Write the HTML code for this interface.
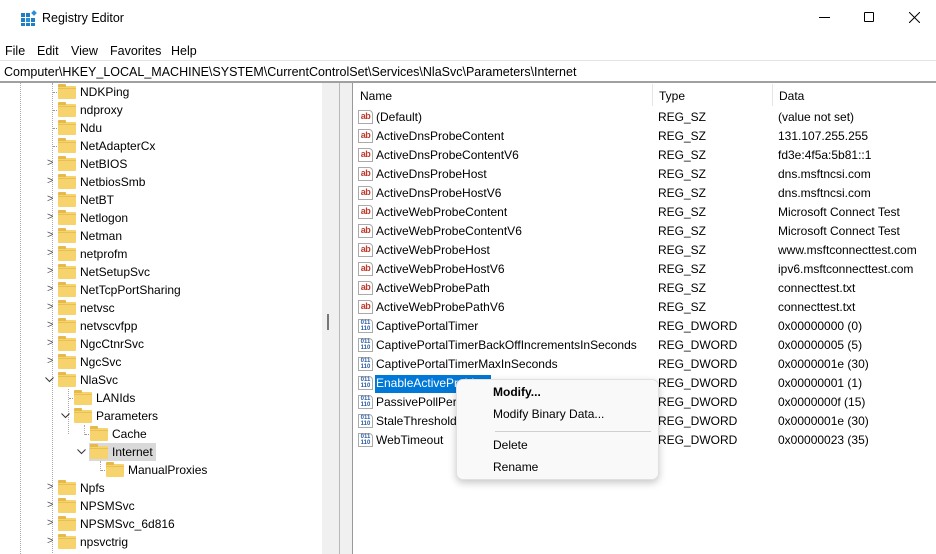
<!DOCTYPE html>
<html><head><meta charset="utf-8"><style>
*{margin:0;padding:0;box-sizing:border-box}
body{width:936px;height:554px;overflow:hidden;background:#fff;font-family:"Liberation Sans",sans-serif;font-size:12px;color:#000;position:relative}
.a{position:absolute;white-space:nowrap}
.t{position:absolute;height:18px;line-height:18px;white-space:nowrap}
.f{position:absolute;width:18px;height:13px;background:#f6d36c;border-radius:1px}
.f:before{content:"";position:absolute;left:0;top:-2px;width:8px;height:3px;background:#e6b94a;border-radius:1px 1px 0 0}
.f:after{content:"";position:absolute;left:0;right:0;top:2px;height:1px;background:#e8bf55}
.ex{position:absolute;font-size:11px;color:#555}
.dh{position:absolute;height:0;border-top:1px dotted #999;width:6px}
.r{position:absolute;height:19px;line-height:19px;white-space:nowrap}
.ab{position:absolute;width:15px;height:14px;border:1px solid #aaa;border-radius:0 4px 0 0;background:#fff;font-size:9px;font-weight:bold;color:#c0392b;line-height:11px;text-align:center;letter-spacing:-0.5px}
.dw{position:absolute;width:15px;height:14px;border:1px solid #aaa;border-radius:0 4px 0 0;background:#fff;font-size:6px;font-weight:bold;color:#2a5aa0;line-height:6px;text-align:center}
</style></head><body>
<!-- title bar -->
<svg class="a" style="left:21px;top:10px" width="16" height="16" viewBox="0 0 16 16">
<rect x="0" y="3" width="4" height="4" fill="#1f7fc4"/><rect x="5" y="3" width="4" height="4" fill="#1f7fc4"/>
<rect x="0" y="8" width="4" height="4" fill="#1f7fc4"/><rect x="5" y="8" width="4" height="4" fill="#2a90d6"/><rect x="10" y="8" width="4" height="4" fill="#1f7fc4"/>
<rect x="0" y="13" width="4" height="3" fill="#1f7fc4"/><rect x="5" y="13" width="4" height="3" fill="#1f7fc4"/><rect x="10" y="13" width="4" height="3" fill="#1f7fc4"/>
<rect x="11" y="1" width="4" height="4" fill="#2a90d6" transform="rotate(45 13 3)"/></svg>
<div class="a" style="left:42px;top:11px;font-size:12.5px">Registry Editor</div>
<div class="a" style="left:819px;top:17px;width:11px;height:1px;background:#000"></div>
<div class="a" style="left:864px;top:12px;width:10px;height:10px;border:1px solid #000;border-radius:1px"></div>
<svg class="a" style="left:909px;top:12px" width="11" height="11"><path d="M0 0L11 11M11 0L0 11" stroke="#000" stroke-width="1"/></svg>
<!-- menu -->
<div class="a" style="left:5px;top:44px;font-size:12.5px;word-spacing:0">File</div>
<div class="a" style="left:37px;top:44px;font-size:12.5px">Edit</div>
<div class="a" style="left:71px;top:44px;font-size:12.5px">View</div>
<div class="a" style="left:110px;top:44px;font-size:12.5px">Favorites</div>
<div class="a" style="left:171px;top:44px;font-size:12.5px">Help</div>
<!-- address -->
<div class="a" style="left:0;top:60px;width:936px;height:22px;background:#fff;border-top:1px solid #e4e4e4"></div>
<div class="a" style="left:4px;top:65px;font-size:12.5px">Computer\HKEY_LOCAL_MACHINE\SYSTEM\CurrentControlSet\Services\NlaSvc\Parameters\Internet</div>
<div class="a" style="left:0;top:81px;width:936px;height:2px;background:#a0a0a0"></div>
<!-- splitter / scrollbar -->
<div class="a" style="left:322px;top:83px;width:18px;height:471px;background:#f0f0f0"></div>
<div class="a" style="left:327px;top:314px;width:2px;height:16px;background:#777"></div>
<div class="a" style="left:339px;top:83px;width:1px;height:471px;background:#b8b8b8"></div>
<div class="a" style="left:340px;top:83px;width:12px;height:471px;background:#f0f0f0"></div>
<div class="a" style="left:352px;top:83px;width:1px;height:471px;background:#999"></div>
<!-- tree guide lines -->
<div class="a" style="left:20px;top:83px;height:471px;border-left:1px dotted #aaa"></div>
<div class="a" style="left:52px;top:83px;height:470px;border-left:1px dotted #aaa"></div>
<div class="a" style="left:68px;top:389px;height:45px;border-left:1px dotted #aaa"></div>
<div class="a" style="left:84px;top:425px;height:10px;border-left:1px dotted #aaa"></div>
<div class="a" style="left:100px;top:461px;height:10px;border-left:1px dotted #aaa"></div>
<div class="dh" style="left:53px;top:92px"></div><div class="dh" style="left:53px;top:110px"></div><div class="dh" style="left:53px;top:128px"></div><div class="dh" style="left:53px;top:146px"></div>
<div class="dh" style="left:69px;top:398px"></div><div class="dh" style="left:85px;top:434px"></div><div class="dh" style="left:101px;top:470px"></div>
<!-- tree rows level1 -->
<div class="f" style="left:58px;top:86px"></div><div class="t" style="left:80px;top:83px">NDKPing</div>
<div class="f" style="left:58px;top:104px"></div><div class="t" style="left:80px;top:101px">ndproxy</div>
<div class="f" style="left:58px;top:122px"></div><div class="t" style="left:80px;top:119px">Ndu</div>
<div class="f" style="left:58px;top:140px"></div><div class="t" style="left:80px;top:137px">NetAdapterCx</div>
<div class="ex" style="left:47px;top:157px">&gt;</div><div class="f" style="left:58px;top:158px"></div><div class="t" style="left:80px;top:155px">NetBIOS</div>
<div class="ex" style="left:47px;top:175px">&gt;</div><div class="f" style="left:58px;top:176px"></div><div class="t" style="left:80px;top:173px">NetbiosSmb</div>
<div class="ex" style="left:47px;top:193px">&gt;</div><div class="f" style="left:58px;top:194px"></div><div class="t" style="left:80px;top:191px">NetBT</div>
<div class="ex" style="left:47px;top:211px">&gt;</div><div class="f" style="left:58px;top:212px"></div><div class="t" style="left:80px;top:209px">Netlogon</div>
<div class="ex" style="left:47px;top:229px">&gt;</div><div class="f" style="left:58px;top:230px"></div><div class="t" style="left:80px;top:227px">Netman</div>
<div class="ex" style="left:47px;top:247px">&gt;</div><div class="f" style="left:58px;top:248px"></div><div class="t" style="left:80px;top:245px">netprofm</div>
<div class="ex" style="left:47px;top:265px">&gt;</div><div class="f" style="left:58px;top:266px"></div><div class="t" style="left:80px;top:263px">NetSetupSvc</div>
<div class="ex" style="left:47px;top:283px">&gt;</div><div class="f" style="left:58px;top:284px"></div><div class="t" style="left:80px;top:281px">NetTcpPortSharing</div>
<div class="ex" style="left:47px;top:301px">&gt;</div><div class="f" style="left:58px;top:302px"></div><div class="t" style="left:80px;top:299px">netvsc</div>
<div class="ex" style="left:47px;top:319px">&gt;</div><div class="f" style="left:58px;top:320px"></div><div class="t" style="left:80px;top:317px">netvscvfpp</div>
<div class="ex" style="left:47px;top:337px">&gt;</div><div class="f" style="left:58px;top:338px"></div><div class="t" style="left:80px;top:335px">NgcCtnrSvc</div>
<div class="ex" style="left:47px;top:355px">&gt;</div><div class="f" style="left:58px;top:356px"></div><div class="t" style="left:80px;top:353px">NgcSvc</div>
<svg class="a" style="left:45px;top:377px" width="9" height="6"><path d="M0.5 0.5L4.5 4.5L8.5 0.5" fill="none" stroke="#333"/></svg><div class="f" style="left:58px;top:374px"></div><div class="t" style="left:80px;top:371px">NlaSvc</div>
<div class="f" style="left:74px;top:392px"></div><div class="t" style="left:96px;top:389px">LANIds</div>
<svg class="a" style="left:61px;top:413px" width="9" height="6"><path d="M0.5 0.5L4.5 4.5L8.5 0.5" fill="none" stroke="#333"/></svg><div class="f" style="left:74px;top:410px"></div><div class="t" style="left:96px;top:407px">Parameters</div>
<div class="f" style="left:90px;top:428px"></div><div class="t" style="left:112px;top:425px">Cache</div>
<div class="a" style="left:89px;top:443px;width:67px;height:18px;background:#d9d9d9"></div>
<svg class="a" style="left:77px;top:449px" width="9" height="6"><path d="M0.5 0.5L4.5 4.5L8.5 0.5" fill="none" stroke="#333"/></svg><div class="f" style="left:90px;top:446px"></div><div class="t" style="left:112px;top:443px">Internet</div>
<div class="f" style="left:106px;top:464px"></div><div class="t" style="left:128px;top:461px">ManualProxies</div>
<div class="ex" style="left:47px;top:481px">&gt;</div><div class="f" style="left:58px;top:482px"></div><div class="t" style="left:80px;top:479px">Npfs</div>
<div class="ex" style="left:47px;top:499px">&gt;</div><div class="f" style="left:58px;top:500px"></div><div class="t" style="left:80px;top:497px">NPSMSvc</div>
<div class="ex" style="left:47px;top:517px">&gt;</div><div class="f" style="left:58px;top:518px"></div><div class="t" style="left:80px;top:515px">NPSMSvc_6d816</div>
<div class="ex" style="left:47px;top:535px">&gt;</div><div class="f" style="left:58px;top:536px"></div><div class="t" style="left:80px;top:533px">npsvctrig</div>
<!-- right header -->
<div class="a" style="left:360px;top:89px">Name</div>
<div class="a" style="left:652px;top:84px;width:1px;height:22px;background:#e5e5e5"></div>
<div class="a" style="left:659px;top:89px">Type</div>
<div class="a" style="left:772px;top:84px;width:1px;height:22px;background:#e5e5e5"></div>
<div class="a" style="left:779px;top:89px">Data</div>
<!-- rows -->
<div class="ab" style="left:358px;top:110px">ab</div><div class="r" style="left:376px;top:108px">(Default)</div><div class="r" style="left:658px;top:108px">REG_SZ</div><div class="r" style="left:778px;top:108px">(value not set)</div>
<div class="ab" style="left:358px;top:129px">ab</div><div class="r" style="left:376px;top:127px">ActiveDnsProbeContent</div><div class="r" style="left:658px;top:127px">REG_SZ</div><div class="r" style="left:778px;top:127px">131.107.255.255</div>
<div class="ab" style="left:358px;top:148px">ab</div><div class="r" style="left:376px;top:146px">ActiveDnsProbeContentV6</div><div class="r" style="left:658px;top:146px">REG_SZ</div><div class="r" style="left:778px;top:146px">fd3e:4f5a:5b81::1</div>
<div class="ab" style="left:358px;top:167px">ab</div><div class="r" style="left:376px;top:165px">ActiveDnsProbeHost</div><div class="r" style="left:658px;top:165px">REG_SZ</div><div class="r" style="left:778px;top:165px">dns.msftncsi.com</div>
<div class="ab" style="left:358px;top:186px">ab</div><div class="r" style="left:376px;top:184px">ActiveDnsProbeHostV6</div><div class="r" style="left:658px;top:184px">REG_SZ</div><div class="r" style="left:778px;top:184px">dns.msftncsi.com</div>
<div class="ab" style="left:358px;top:205px">ab</div><div class="r" style="left:376px;top:203px">ActiveWebProbeContent</div><div class="r" style="left:658px;top:203px">REG_SZ</div><div class="r" style="left:778px;top:203px">Microsoft Connect Test</div>
<div class="ab" style="left:358px;top:224px">ab</div><div class="r" style="left:376px;top:222px">ActiveWebProbeContentV6</div><div class="r" style="left:658px;top:222px">REG_SZ</div><div class="r" style="left:778px;top:222px">Microsoft Connect Test</div>
<div class="ab" style="left:358px;top:243px">ab</div><div class="r" style="left:376px;top:241px">ActiveWebProbeHost</div><div class="r" style="left:658px;top:241px">REG_SZ</div><div class="r" style="left:778px;top:241px">www.msftconnecttest.com</div>
<div class="ab" style="left:358px;top:262px">ab</div><div class="r" style="left:376px;top:260px">ActiveWebProbeHostV6</div><div class="r" style="left:658px;top:260px">REG_SZ</div><div class="r" style="left:778px;top:260px">ipv6.msftconnecttest.com</div>
<div class="ab" style="left:358px;top:281px">ab</div><div class="r" style="left:376px;top:279px">ActiveWebProbePath</div><div class="r" style="left:658px;top:279px">REG_SZ</div><div class="r" style="left:778px;top:279px">connecttest.txt</div>
<div class="ab" style="left:358px;top:300px">ab</div><div class="r" style="left:376px;top:298px">ActiveWebProbePathV6</div><div class="r" style="left:658px;top:298px">REG_SZ</div><div class="r" style="left:778px;top:298px">connecttest.txt</div>
<div class="dw" style="left:358px;top:319px">011<br>110</div><div class="r" style="left:376px;top:317px">CaptivePortalTimer</div><div class="r" style="left:658px;top:317px">REG_DWORD</div><div class="r" style="left:778px;top:317px">0x00000000 (0)</div>
<div class="dw" style="left:358px;top:338px">011<br>110</div><div class="r" style="left:376px;top:336px">CaptivePortalTimerBackOffIncrementsInSeconds</div><div class="r" style="left:658px;top:336px">REG_DWORD</div><div class="r" style="left:778px;top:336px">0x00000005 (5)</div>
<div class="dw" style="left:358px;top:357px">011<br>110</div><div class="r" style="left:376px;top:355px">CaptivePortalTimerMaxInSeconds</div><div class="r" style="left:658px;top:355px">REG_DWORD</div><div class="r" style="left:778px;top:355px">0x0000001e (30)</div>
<div class="dw" style="left:358px;top:376px">011<br>110</div><div class="r" style="left:375px;top:375px;height:18px;line-height:17px;width:116px;background:#0078d7;color:#fff;padding-left:1px;overflow:hidden">EnableActiveProbing</div><div class="r" style="left:658px;top:374px">REG_DWORD</div><div class="r" style="left:778px;top:374px">0x00000001 (1)</div>
<div class="dw" style="left:358px;top:395px">011<br>110</div><div class="r" style="left:376px;top:393px">PassivePollPeriod</div><div class="r" style="left:658px;top:393px">REG_DWORD</div><div class="r" style="left:778px;top:393px">0x0000000f (15)</div>
<div class="dw" style="left:358px;top:414px">011<br>110</div><div class="r" style="left:376px;top:412px">StaleThreshold</div><div class="r" style="left:658px;top:412px">REG_DWORD</div><div class="r" style="left:778px;top:412px">0x0000001e (30)</div>
<div class="dw" style="left:358px;top:433px">011<br>110</div><div class="r" style="left:376px;top:431px">WebTimeout</div><div class="r" style="left:658px;top:431px">REG_DWORD</div><div class="r" style="left:778px;top:431px">0x00000023 (35)</div>
<!-- context menu -->
<div class="a" style="left:456px;top:379px;width:203px;height:101px;background:#f9f9f9;border:1px solid #e0e0e0;border-radius:7px;box-shadow:0 3px 8px rgba(0,0,0,0.22)"></div>
<div class="a" style="left:493px;top:385px;font-weight:bold">Modify...</div>
<div class="a" style="left:493px;top:407px">Modify Binary Data...</div>
<div class="a" style="left:495px;top:431px;width:156px;height:1px;background:#d0d0d0"></div>
<div class="a" style="left:493px;top:438px">Delete</div>
<div class="a" style="left:493px;top:460px">Rename</div>
</body></html>
